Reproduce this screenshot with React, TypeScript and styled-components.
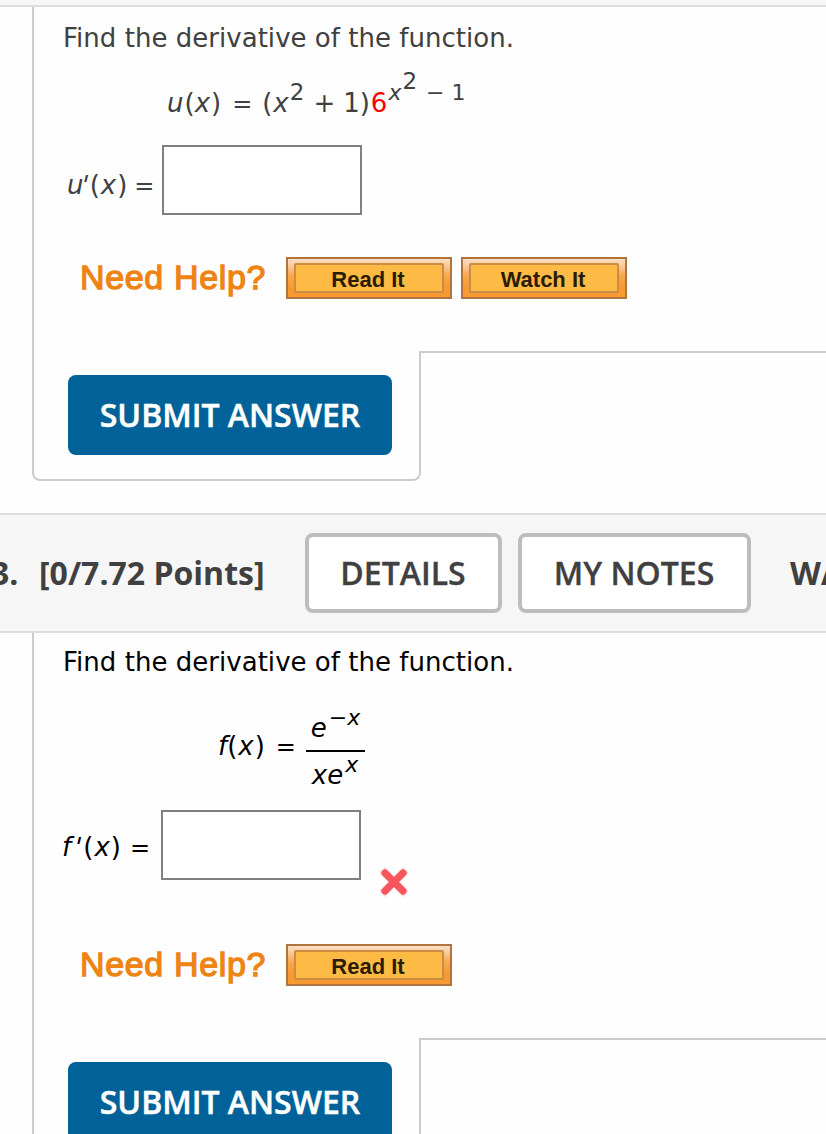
import React from "react";
import styled, { createGlobalStyle } from "styled-components";

const GlobalStyle = createGlobalStyle`
  * { box-sizing: border-box; }
  body { margin: 0; background: #fefefe; }
`;

const Page = styled.main`
  width: 826px;
  height: 1134px;
  overflow: hidden;
  display: flex;
  flex-direction: column;
  font-family: "DejaVu Sans", Verdana, sans-serif;
  font-size: 26px;
`;

const PreviousHeader = styled.div`
  flex: none;
  height: 7px;
  background: #f6f6f6;
  border-bottom: 2px solid #ddd;
`;

const Header = styled.header`
  flex: none;
  height: 120px;
  margin-top: 32px;
  background: #f6f6f6;
  border-top: 2px solid #ddd;
  border-bottom: 2px solid #ddd;
  display: flex;
  align-items: center;
  white-space: nowrap;
  font: 700 32px/44px "Open Sans", sans-serif;
  color: #404040;
`;

const QuestionNumber = styled.span`
  flex: none;
  width: 40px;
  margin-left: -9px;
`;

const Points = styled.span`
  flex: none;
  width: 274px;
  padding-left: 8px;
`;

const HeaderButton = styled.button<{ $width: number }>`
  flex: none;
  width: ${(p) => p.$width}px;
  height: 80px;
  margin: 0 16px 0 0;
  padding: 0;
  background: #fff;
  border: 4px solid #bdbdbd;
  border-radius: 8px;
  font: 600 32px/44px "Open Sans", sans-serif;
  color: #404040;
  -webkit-text-stroke: 0.3px #404040;
  text-indent: -1px;
`;

const Source = styled.span`
  margin-left: 23px;
`;

const Question = styled.section<{ $height: number; $top: number; $color: string }>`
  flex: none;
  height: ${(p) => p.$height}px;
  margin-left: 32px;
  padding: ${(p) => p.$top}px 0 0 28px;
  border-left: 2px solid #ccc;
  color: ${(p) => p.$color};
`;

const Prompt = styled.p`
  margin: 0 0 0 1px;
  line-height: 32px;
  letter-spacing: 0.03px;
`;

const Formula = styled.div<{ $top: number; $left: number }>`
  display: flex;
  align-items: baseline;
  height: 32px;
  line-height: 32px;
  white-space: pre;
  margin-top: ${(p) => p.$top}px;
  margin-left: ${(p) => p.$left}px;
`;

const Term = styled.span<{ $gap?: number }>`
  margin-left: ${(p) => p.$gap ?? 0}px;
`;

const Variable = styled(Term)`
  font-style: italic;
`;

const Equals = styled(Term)`
  width: 22px;
  font-size: 24px;
`;

const Prime = styled(Term)`
  display: inline-block;
  transform: skewX(-14deg);
`;

const Accent = styled(Term)`
  color: #f00;
`;

const Exponent = styled(Term)<{ $rise: number; $size?: number }>`
  font-size: ${(p) => p.$size ?? 22}px;
  position: relative;
  top: ${(p) => -p.$rise}px;
`;

const Fraction = styled.div`
  flex: none;
  width: 59px;
  height: 84px;
  margin-left: 8px;
  align-self: flex-start;
  margin-top: -18px;
`;

const FractionPart = styled.div<{ $height: number; $line: number }>`
  height: ${(p) => p.$height}px;
  display: flex;
  align-items: baseline;
  line-height: ${(p) => p.$line}px;
  padding-left: 5px;
`;

const FractionBar = styled.div`
  height: 2px;
  background: #000;
`;

const AnswerRow = styled.div<{ $top: number; $indent: number }>`
  display: flex;
  height: 70px;
  margin-top: ${(p) => p.$top}px;
  padding-left: ${(p) => p.$indent}px;
`;

const AnswerLabel = styled.label<{ $width: number; $top: number }>`
  flex: none;
  display: flex;
  align-items: baseline;
  height: 70px;
  width: ${(p) => p.$width}px;
  padding-top: ${(p) => p.$top}px;
  line-height: 32px;
  white-space: pre;
`;

const AnswerBox = styled.input`
  width: 200px;
  height: 70px;
  margin: 0;
  padding: 0 8px;
  border: 2px solid #808080;
  border-radius: 0;
  background: #fff;
`;

const Incorrect = styled.svg`
  flex: none;
  margin: 57px 0 0 19px;
`;

const HelpRow = styled.div<{ $top: number }>`
  display: flex;
  height: 42px;
  margin-top: ${(p) => p.$top}px;
  padding-left: 18px;
  font-family: "Liberation Sans", Arial, sans-serif;
`;

const HelpTitle = styled.span`
  flex: none;
  width: 206px;
  font-size: 34px;
  line-height: 40px;
  letter-spacing: 0.65px;
  color: #ee8413;
  -webkit-text-stroke: 1.3px #ee8413;
  white-space: nowrap;
`;

const HelpButton = styled.button`
  width: 166px;
  height: 42px;
  margin: 0 9px 0 0;
  padding: 4px 6px;
  border: 2px solid #b0753f;
  background: linear-gradient(#fce0c6 0, #f9cda0 6px, #f8a850 16px, #f79a30 28px, #f79930 100%);
  font: 700 22px/30px "Liberation Sans", Arial, sans-serif;
  color: #2b1d05;
`;

const HelpFace = styled.span`
  display: block;
  height: 30px;
  border: 2px solid #cb8c44;
  border-radius: 2px;
  background: #fdbb45;
  text-indent: -2px;
`;

const Footer = styled.footer`
  flex: none;
  display: flex;
  height: 130px;
  margin-left: 32px;
`;

const SubmitPanel = styled.div`
  width: 389px;
  padding: 24px 0 0 34px;
  border: 2px solid #ccc;
  border-top: 0;
  border-radius: 0 0 8px 8px;
`;

const FooterRule = styled.div`
  flex: 1;
  margin-left: -2px;
  height: 2px;
  background: #ccc;
`;

const SubmitButton = styled.button`
  width: 324px;
  height: 80px;
  padding: 0;
  border: 0;
  border-radius: 8px;
  background: #006298;
  color: #fff;
  font: 600 32px/44px "Open Sans", sans-serif;
  -webkit-text-stroke: 0.5px #fff;
`;

function Submit() {
  return (
    <Footer>
      <SubmitPanel>
        <SubmitButton>SUBMIT ANSWER</SubmitButton>
      </SubmitPanel>
      <FooterRule />
    </Footer>
  );
}

function Help({ top, options }: { top: number; options: string[] }) {
  return (
    <HelpRow $top={top}>
      <HelpTitle>Need Help?</HelpTitle>
      {options.map((option) => (
        <HelpButton key={option}>
          <HelpFace>{option}</HelpFace>
        </HelpButton>
      ))}
    </HelpRow>
  );
}

export default function App() {
  return (
    <Page>
      <GlobalStyle />
      <PreviousHeader />
      <Question $height={344} $top={15} $color="#404040">
        <Prompt>Find the derivative of the function.</Prompt>
        <Formula $top={33} $left={105}>
          <Variable>u</Variable>
          <Term $gap={1}>(</Term>
          <Variable>x</Variable>
          <Term $gap={1}>)</Term>
          <Equals $gap={11}>=</Equals>
          <Term $gap={8}>(</Term>
          <Variable $gap={1}>x</Variable>
          <Exponent $rise={12} $size={23} $gap={1}>2</Exponent>
          <Term $gap={9}>+</Term>
          <Term $gap={8}>1)</Term>
          <Accent $gap={1}>6</Accent>
          <Exponent $rise={12} $gap={1}><Variable>x</Variable></Exponent>
          <Exponent $rise={23} $size={23} $gap={1}>2</Exponent>
          <Exponent $rise={12} $gap={9}>−</Exponent>
          <Exponent $rise={12} $gap={7}>1</Exponent>
        </Formula>
        <AnswerRow $top={26} $indent={5}>
          <AnswerLabel $width={95} $top={24}>
            <Variable>u</Variable>
            <Prime $gap={-2}>'</Prime>
            <Term $gap={1}>(</Term>
            <Variable $gap={1}>x</Variable>
            <Term $gap={1}>)</Term>
            <Equals $gap={7}>=</Equals>
          </AnswerLabel>
          <AnswerBox />
        </AnswerRow>
        <Help top={42} options={["Read It", "Watch It"]} />
      </Question>
      <Submit />
      <Header>
        <QuestionNumber>3.</QuestionNumber>
        <Points>[0/7.72 Points]</Points>
        <HeaderButton $width={197}>DETAILS</HeaderButton>
        <HeaderButton $width={233}>MY NOTES</HeaderButton>
        <Source>WA</Source>
      </Header>
      <Question $height={405} $top={13} $color="#000">
        <Prompt>Find the derivative of the function.</Prompt>
        <Formula $top={52} $left={156}>
          <Variable>f</Variable>
          <Term>(</Term>
          <Variable $gap={1}>x</Variable>
          <Term $gap={1}>)</Term>
          <Equals $gap={11}>=</Equals>
          <Fraction>
            <FractionPart $height={38} $line={32}>
              <Variable>e</Variable>
              <Exponent $rise={12} $gap={2}>−</Exponent>
              <Exponent $rise={12}><Variable>x</Variable></Exponent>
            </FractionPart>
            <FractionBar />
            <FractionPart $height={40} $line={46}>
              <Variable $gap={1}>x</Variable>
              <Variable>e</Variable>
              <Exponent $rise={12} $gap={2}><Variable>x</Variable></Exponent>
            </FractionPart>
          </Fraction>
        </Formula>
        <AnswerRow $top={48} $indent={0}>
          <AnswerLabel $width={99} $top={21}>
            <Variable>f</Variable>
            <Prime $gap={3}>'</Prime>
            <Term $gap={2}>(</Term>
            <Variable $gap={1}>x</Variable>
            <Term $gap={1}>)</Term>
            <Equals $gap={9}>=</Equals>
          </AnswerLabel>
          <AnswerBox />
          <Incorrect width="28" height="30" viewBox="0 0 28 30">
            <path d="M5 6 23 24M23 6 5 24" stroke="#f9a5a8" strokeWidth="8.5" strokeLinecap="square" opacity=".45" />
            <path d="M5 6 23 24M23 6 5 24" stroke="#f6555b" strokeWidth="7" strokeLinecap="round" />
          </Incorrect>
        </AnswerRow>
        <Help top={64} options={["Read It"]} />
      </Question>
      <Submit />
    </Page>
  );
}
